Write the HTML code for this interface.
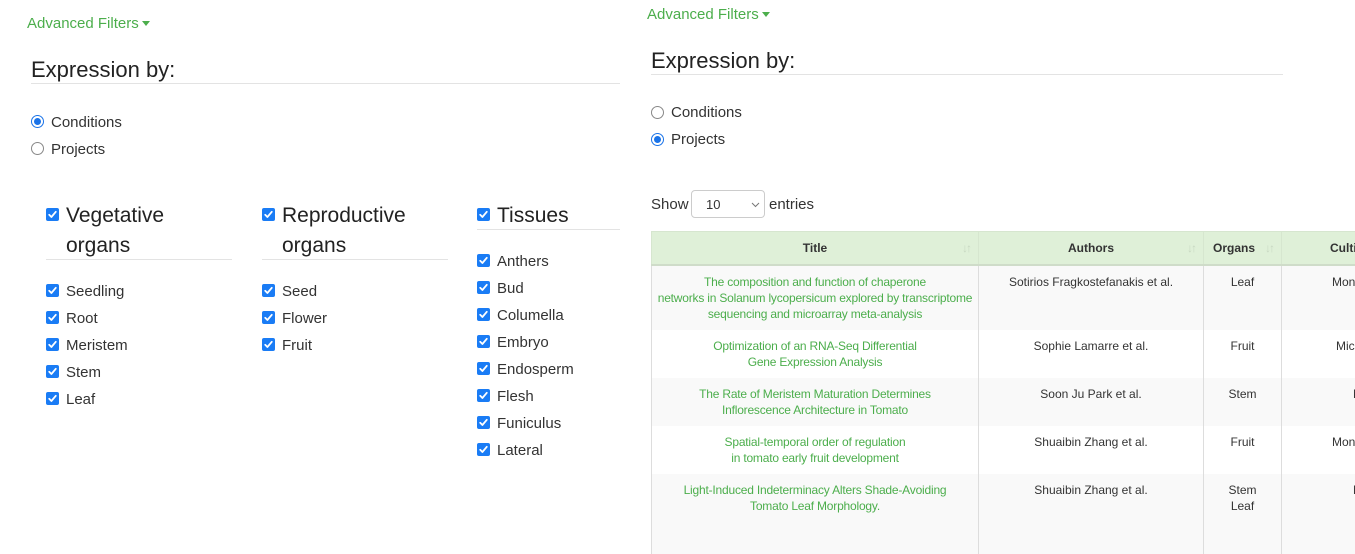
<!DOCTYPE html>
<html><head><meta charset="utf-8"><style>
*{margin:0;padding:0;box-sizing:border-box}
body{width:1355px;height:553px;overflow:hidden;background:#fff;font-family:"Liberation Sans",Arial,sans-serif;color:#333;position:relative}
.a{position:absolute;white-space:nowrap}
.g{color:#4cae4c}
.af{font-size:15px;line-height:18px;margin-top:1px}
.caret{display:inline-block;width:0;height:0;border-left:4px solid transparent;border-right:4px solid transparent;border-top:5px solid #4cae4c;vertical-align:middle;margin-left:3px;margin-top:-2px}
.h{font-size:22px;line-height:26px;color:#222;margin-top:1px}
.hr{position:absolute;height:1px;background:#e3e3e3}
.rad{position:absolute;width:13px;height:13px;border-radius:50%;border:1px solid #888;background:#fff}
.rad.on{border:1px solid #1a73e8;background:#fff}
.rad.on::after{content:"";position:absolute;left:2px;top:2px;width:7px;height:7px;border-radius:50%;background:#1a73e8}
.lbl{font-size:15px;line-height:18px;color:#333;margin-top:2px}
.cb{position:absolute;width:13px;height:13px;border-radius:2px;background:#1a7cf5}
.cb svg{position:absolute;left:1px;top:1px}
.gh{font-size:21px;line-height:30px;color:#222;margin-top:2px}
table{position:absolute;left:651px;top:231px;border-collapse:collapse;font-size:12px;table-layout:fixed;width:780px}
th{background:#dff0d8;height:33px;font-weight:bold;border:1px solid #d6e6cf;border-bottom:2px solid #cfdcc9;position:relative;color:#333}
td{text-align:center;vertical-align:top;padding-top:8px;line-height:16px;border-left:1px solid #ddd;border-right:1px solid #ddd;white-space:nowrap;overflow:hidden}
tr.s td{background:#f9f9f9}
td.t{color:#4cae4c;letter-spacing:-0.2px}
.si{position:absolute;right:8px;top:9px;color:#c8d8c2;font-size:12px;font-weight:normal;letter-spacing:-2px}
</style></head><body>
<svg width="0" height="0" style="position:absolute"><defs><symbol id="ck" viewBox="0 0 11 11"><path d="M2.2 5.8 L4.4 8 L8.8 2.8" fill="none" stroke="#fff" stroke-width="1.8" stroke-linecap="round" stroke-linejoin="round"/></symbol></defs></svg>

<!-- LEFT -->
<div class="a af g" style="left:27px;top:14px">Advanced Filters<span class="caret"></span></div>
<div class="a h" style="left:31px;top:56px">Expression by:</div>
<div class="hr" style="left:31px;top:83px;width:589px"></div>
<div class="rad on" style="left:31px;top:115px"></div><div class="a lbl" style="left:51px;top:112px">Conditions</div>
<div class="rad" style="left:31px;top:142px"></div><div class="a lbl" style="left:51px;top:139px">Projects</div>

<div class="cb" style="left:46px;top:208px"><svg width="11" height="11"><use href="#ck"/></svg></div>
<div class="a gh" style="left:66px;top:199px">Vegetative</div>
<div class="a gh" style="left:66px;top:229px">organs</div>
<div class="hr" style="left:46px;top:259px;width:186px"></div>

<div class="cb" style="left:262px;top:208px"><svg width="11" height="11"><use href="#ck"/></svg></div>
<div class="a gh" style="left:282px;top:199px">Reproductive</div>
<div class="a gh" style="left:282px;top:229px">organs</div>
<div class="hr" style="left:262px;top:259px;width:186px"></div>

<div class="cb" style="left:477px;top:208px"><svg width="11" height="11"><use href="#ck"/></svg></div>
<div class="a gh" style="left:497px;top:199px">Tissues</div>
<div class="hr" style="left:477px;top:229px;width:143px"></div>

<div class="cb" style="left:46px;top:284px"><svg width="11" height="11"><use href="#ck"/></svg></div><div class="a lbl" style="left:66px;top:281px">Seedling</div>
<div class="cb" style="left:46px;top:311px"><svg width="11" height="11"><use href="#ck"/></svg></div><div class="a lbl" style="left:66px;top:308px">Root</div>
<div class="cb" style="left:46px;top:338px"><svg width="11" height="11"><use href="#ck"/></svg></div><div class="a lbl" style="left:66px;top:335px">Meristem</div>
<div class="cb" style="left:46px;top:365px"><svg width="11" height="11"><use href="#ck"/></svg></div><div class="a lbl" style="left:66px;top:362px">Stem</div>
<div class="cb" style="left:46px;top:392px"><svg width="11" height="11"><use href="#ck"/></svg></div><div class="a lbl" style="left:66px;top:389px">Leaf</div>

<div class="cb" style="left:262px;top:284px"><svg width="11" height="11"><use href="#ck"/></svg></div><div class="a lbl" style="left:282px;top:281px">Seed</div>
<div class="cb" style="left:262px;top:311px"><svg width="11" height="11"><use href="#ck"/></svg></div><div class="a lbl" style="left:282px;top:308px">Flower</div>
<div class="cb" style="left:262px;top:338px"><svg width="11" height="11"><use href="#ck"/></svg></div><div class="a lbl" style="left:282px;top:335px">Fruit</div>

<div class="cb" style="left:477px;top:254px"><svg width="11" height="11"><use href="#ck"/></svg></div><div class="a lbl" style="left:497px;top:251px">Anthers</div>
<div class="cb" style="left:477px;top:281px"><svg width="11" height="11"><use href="#ck"/></svg></div><div class="a lbl" style="left:497px;top:278px">Bud</div>
<div class="cb" style="left:477px;top:308px"><svg width="11" height="11"><use href="#ck"/></svg></div><div class="a lbl" style="left:497px;top:305px">Columella</div>
<div class="cb" style="left:477px;top:335px"><svg width="11" height="11"><use href="#ck"/></svg></div><div class="a lbl" style="left:497px;top:332px">Embryo</div>
<div class="cb" style="left:477px;top:362px"><svg width="11" height="11"><use href="#ck"/></svg></div><div class="a lbl" style="left:497px;top:359px">Endosperm</div>
<div class="cb" style="left:477px;top:389px"><svg width="11" height="11"><use href="#ck"/></svg></div><div class="a lbl" style="left:497px;top:386px">Flesh</div>
<div class="cb" style="left:477px;top:416px"><svg width="11" height="11"><use href="#ck"/></svg></div><div class="a lbl" style="left:497px;top:413px">Funiculus</div>
<div class="cb" style="left:477px;top:443px"><svg width="11" height="11"><use href="#ck"/></svg></div><div class="a lbl" style="left:497px;top:440px">Lateral</div>

<!-- RIGHT -->
<div class="a af g" style="left:647px;top:5px">Advanced Filters<span class="caret"></span></div>
<div class="a h" style="left:651px;top:47px">Expression by:</div>
<div class="hr" style="left:651px;top:74px;width:632px"></div>
<div class="rad" style="left:651px;top:106px"></div><div class="a lbl" style="left:671px;top:102px">Conditions</div>
<div class="rad on" style="left:651px;top:133px"></div><div class="a lbl" style="left:671px;top:129px">Projects</div>

<div class="a lbl" style="left:651px;top:194px">Show</div>
<div class="a" style="left:691px;top:190px;width:74px;height:28px;border:1px solid #ccc;border-radius:4px;font-size:13px;line-height:28px;padding-left:14px">10<svg style="position:absolute;right:4px;top:11px" width="9" height="6"><path d="M1 1 L4.5 4.5 L8 1" fill="none" stroke="#777" stroke-width="1"/></svg></div>
<div class="a lbl" style="left:769px;top:194px">entries</div>

<table>
<colgroup><col style="width:327px"><col style="width:225px"><col style="width:78px"><col style="width:150px"></colgroup>
<tr><th>Title<span class="si">↓↑</span></th><th>Authors<span class="si">↓↑</span></th><th style="text-align:left;padding-left:9px">Organs<span class="si">↓↑</span></th><th style="text-align:left;padding-left:48px">Cultivar</th></tr>
<tr class="s" style="height:65px"><td class="t">The composition and function of chaperone<br>networks in Solanum lycopersicum explored by transcriptome<br>sequencing and microarray meta-analysis</td><td>Sotirios Fragkostefanakis et al.</td><td>Leaf</td><td style="text-align:left;padding-left:50px">Moneymaker</td></tr>
<tr style="height:48px"><td class="t">Optimization of an RNA-Seq Differential<br>Gene Expression Analysis</td><td>Sophie Lamarre et al.</td><td>Fruit</td><td style="text-align:left;padding-left:54px">Micro-Tom</td></tr>
<tr class="s" style="height:48px"><td class="t">The Rate of Meristem Maturation Determines<br>Inflorescence Architecture in Tomato</td><td>Soon Ju Park et al.</td><td>Stem</td><td style="text-align:left;padding-left:71px">M82</td></tr>
<tr style="height:48px"><td class="t">Spatial-temporal order of regulation<br>in tomato early fruit development</td><td>Shuaibin Zhang et al.</td><td>Fruit</td><td style="text-align:left;padding-left:50px">Moneymaker</td></tr>
<tr class="s" style="height:80px"><td class="t">Light-Induced Indeterminacy Alters Shade-Avoiding<br>Tomato Leaf Morphology.</td><td>Shuaibin Zhang et al.</td><td>Stem<br>Leaf</td><td style="text-align:left;padding-left:71px">M82</td></tr>
</table>
</body></html>
